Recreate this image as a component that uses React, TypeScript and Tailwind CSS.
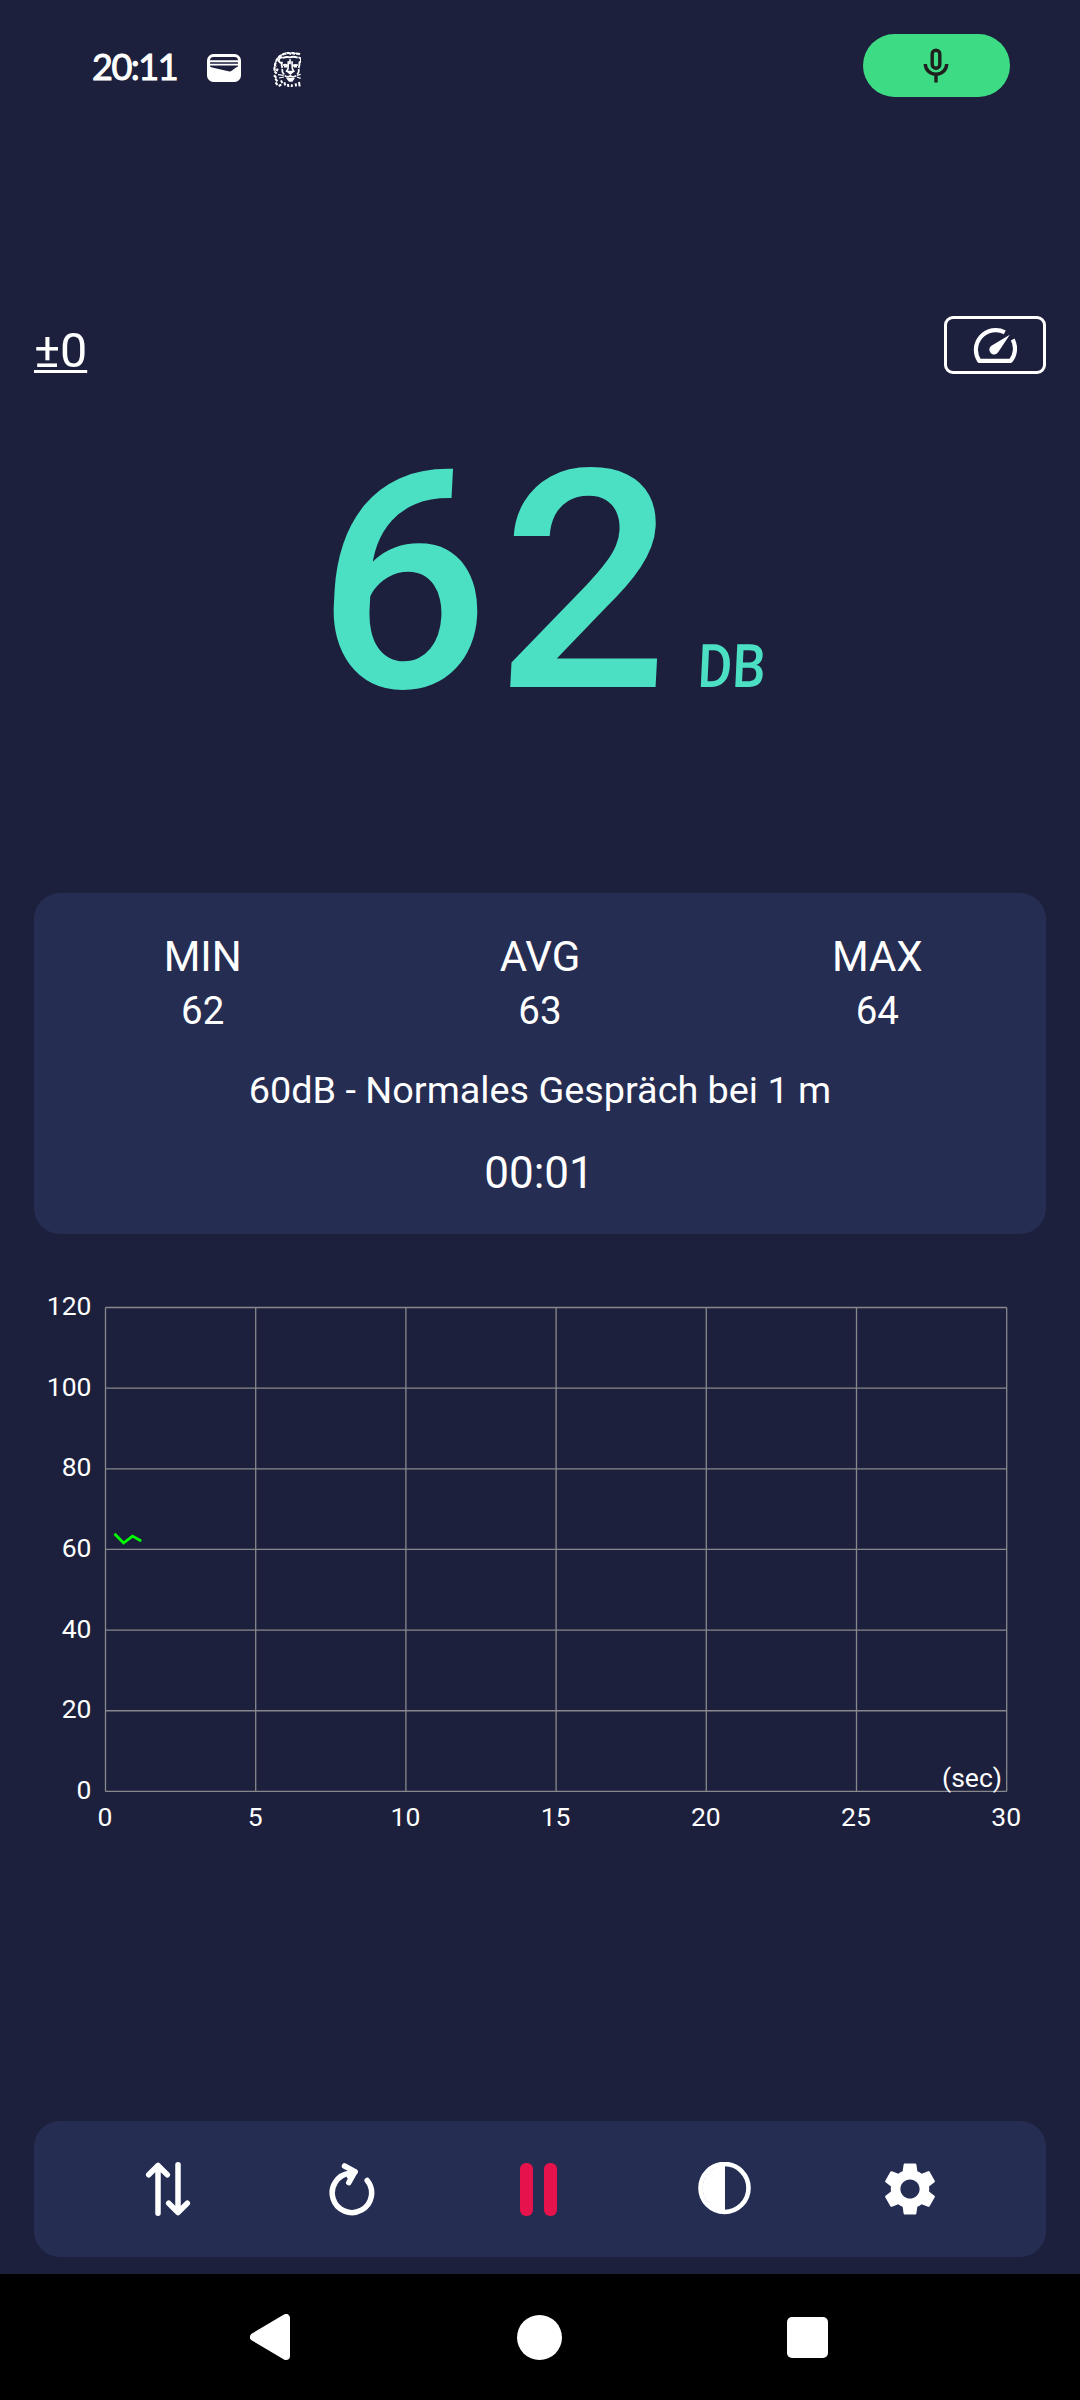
import { MdSettings } from 'react-icons/md';

const stats = [
  { label: 'MIN', value: 62 },
  { label: 'AVG', value: 63 },
  { label: 'MAX', value: 64 },
];

const levels = [120, 100, 80, 60, 40, 20, 0];
const seconds = [0, 5, 10, 15, 20, 25, 30];

// Chart geometry
const LEFT = 105.5;
const TOP = 27.5;
const STEP_X = 150.2;
const STEP_Y = 80.65;

// [seconds, dB]
const samples = [
  [0.3, 63.9],
  [0.6, 61.6],
  [0.9, 63.3],
  [1.19, 62.1],
];

const toX = (sec: number) => LEFT + (sec / 5) * STEP_X;
const toY = (db: number) => TOP + ((120 - db) / 20) * STEP_Y;

function WalletIcon() {
  return (
    <svg className="mt-[5px] ml-[31px]" width="34" height="28" viewBox="0 0 34 28">
      <rect x="1.5" y="1.5" width="31" height="25" rx="5" fill="none" stroke="white" strokeWidth="3" />
      <path d="M3 7.3h28M3 10.6h28" stroke="white" strokeWidth="1.9" />
      <path d="M2 12l3 1.500 17.500 4q1.200.2 2.200-.7L29 13.500l3-1.500v9.500q0 5-5 5H7q-5 0-5-5z" fill="white" />
    </svg>
  );
}

function LionIcon() {
  return (
    <svg className="mt-2 ml-8" width="28" height="36" viewBox="0 0 84 108" fill="none" stroke="white">
      <path d="M81 7q-8-4-14-1-8-5-14-1-9-4-14 0-8-1-12 5-9 1-10 8-8 4-7 12-6 6-3 13-5 6-1 13" strokeWidth="6.500" strokeDasharray="13 1.500" />
      <path d="M5 58l6 7M3 70l7 7M7 80l6 8M8 91l5 8M14 50l-3 7" strokeWidth="6.500" />
      <path d="M29 17q-9-2-11 6t7 10M76 17q6-1 8 5t-6 10" strokeWidth="5.500" />
      <path d="M29 18q11-5 22-2 10-4 23 1M27 29q-3 11 1 19M79 30q2 11-2 18" strokeWidth="5.500" />
      <path d="M30 40q9-5 15 2M59 42q7-6 16-2M33 44h9M63 44h9" strokeWidth="5" />
      <path d="M46 28l-1 22-5 10M57 28l1 22 5 10M51 22v15" strokeWidth="5" />
      <path d="M44 59h16l-8 7zM28 51q-2 11 6 16M77 51q2 11-5 16M52 65v7M35 71q9 7 17 1 8 6 18-1" strokeWidth="5" />
      <path d="M39 78h27l-8 11h-10z" fill="white" stroke="none" />
      <path d="M15 68l17 2M18 78l15-3M72 70l11-3M72 75l11 4" strokeWidth="3.500" />
      <path d="M24 85l4 8M34 91l3 9M45 96l1 9M57 97l-1 8M68 94l1 9M78 90l2 13M25 98l-8 4" strokeWidth="6" />
    </svg>
  );
}

function MicIcon() {
  return (
    <svg className="mr-px" width="26" height="36" viewBox="0 0 26 36" fill="none" stroke="#1f1f1f" strokeWidth="3.400">
      <rect x="9.200" y="2.200" width="7.600" height="18" rx="3.800" />
      <path d="M2.300 16a10.700 10.300 0 0 0 21.400 0M13 26.500v8" />
    </svg>
  );
}

function GaugeIcon() {
  return (
    <svg width="44" height="37" viewBox="0 0 44 37">
      <path
        d="M31.800 5.300A19.800 19.800 0 0 0 6.200 33.800H37.800A19.500 19.500 0 0 0 39.700 12.500"
        fill="none"
        stroke="white"
        strokeWidth="4.200"
        strokeLinejoin="round"
      />
      <path d="M36.800 7.700L25.300 25a4.800 4.800 0 1 1-6.900-6.300z" fill="white" />
    </svg>
  );
}

function SortIcon() {
  return (
    <svg width="54" height="54" viewBox="0 0 54 54" fill="none" stroke="white" strokeWidth="5.500" strokeLinecap="round" strokeLinejoin="round">
      <path d="M17 51.200V3.500M7.700 12.800L17 3.500l9.300 9.300M37 2.800v47.700M27.700 41.200l9.300 9.300 9.300-9.300" />
    </svg>
  );
}

function ReloadIcon() {
  return (
    <svg className="mr-[2px]" width="54" height="54" viewBox="0 0 54 54" fill="none" stroke="white" strokeWidth="5.500" strokeLinecap="round" strokeLinejoin="round">
      <path d="M42.200 18.400A19.700 19.700 0 1 1 24.500 11.300L30 10" />
      <path d="M19.500 4L30 9.700 23.800 20.700" />
      <path d="M23.500 14.500L28.500 11" strokeWidth="4" />
    </svg>
  );
}

function ContrastIcon() {
  return (
    <svg width="54" height="54" viewBox="0 0 54 54">
      <circle cx="26.500" cy="26" r="24" fill="none" stroke="white" strokeWidth="4.600" />
      <path d="M27 3.500V48.500A22.500 22.500 0 0 1 27 3.500z" fill="white" />
    </svg>
  );
}

function Chart() {
  return (
    <svg width="1080" height="570" viewBox="0 0 1080 570" fontSize="26.500" fill="white">
      <g stroke="#88888c" strokeWidth="1.300">
        {levels.map((db) => (
          <line key={db} x1={LEFT} x2={toX(30)} y1={toY(db)} y2={toY(db)} />
        ))}
        {seconds.map((sec) => (
          <line key={sec} x1={toX(sec)} x2={toX(sec)} y1={toY(120)} y2={toY(0)} />
        ))}
      </g>
      {levels.map((db) => (
        <text key={db} x="91.500" y={toY(db) + 7.500} textAnchor="end">
          {db}
        </text>
      ))}
      {seconds.map((sec) => (
        <text key={sec} x={toX(sec) - 0.5} y="546" textAnchor="middle">
          {sec}
        </text>
      ))}
      <text x="1002" y="507" textAnchor="end">
        (sec)
      </text>
      <polyline
        points={samples.map(([sec, db]) => `${toX(sec)},${toY(db)}`).join(' ')}
        fill="none"
        stroke="#00ff00"
        strokeWidth="2.800"
      />
    </svg>
  );
}

export default function App() {
  return (
    <div className="flex h-[2400px] w-[1080px] flex-col overflow-hidden bg-[#1d203c] font-['Roboto',sans-serif] text-white">
      {/* Status bar */}
      <header className="flex h-[131px] items-center pr-[70px] pl-[92px]">
        <span className="w-[84px] font-['Lato',sans-serif] text-[36px] leading-none tracking-[-1.5px] whitespace-nowrap [-webkit-text-stroke:1px_white]">
          20:11
        </span>
        <WalletIcon />
        <LionIcon />
        <div className="ml-auto flex h-[63px] w-[147px] items-center justify-center rounded-full bg-[#3ddc84]">
          <MicIcon />
        </div>
      </header>

      <div className="mt-[185px] flex h-[58px] items-start justify-between px-[34px]">
        <button className="mt-[5px] text-[48.5px] leading-[60px] underline decoration-[3px] underline-offset-[3px]">±0</button>
        <button className="flex h-[58px] w-[102px] items-center justify-center rounded-[9px] border-3 border-white">
          <GaugeIcon />
        </button>
      </div>

      {/* Current level */}
      <div className="mt-[59px] flex h-[460px] items-baseline pl-[310px] text-[#4bdfc3]">
        <span className="origin-bottom -skew-x-3 text-[305px] leading-[300px] font-medium tracking-[8px]">62</span>
        <span className="ml-[25px] origin-left -skew-x-3 scale-x-88 text-[60px] leading-none font-medium">DB</span>
      </div>

      <section className="mx-[34px] h-[341px] rounded-[26px] bg-[#252d53] pt-[39px] text-center">
        <div className="grid grid-cols-3">
          {stats.map((stat) => (
            <div key={stat.label}>
              <div className="text-[42px] leading-[50px]">{stat.label}</div>
              <div className="mt-1 text-[38.5px] leading-[50px]">{stat.value}</div>
            </div>
          ))}
        </div>
        <p className="mt-[29px] text-[37.8px] leading-[50px]">60dB - Normales Gespräch bei 1 m</p>
        <p className="mt-[33px] mr-[2px] text-[44px] leading-[50px]">00:01</p>
      </section>

      <div className="mt-[46px]">
        <Chart />
      </div>

      {/* Toolbar */}
      <nav className="mx-[34px] mt-[271px] flex h-[136px] shrink-0 items-center rounded-[26px] bg-[#252d53] pr-[43px] pl-[41px]">
        <button className="flex flex-1 justify-center">
          <SortIcon />
        </button>
        <button className="flex flex-1 justify-center">
          <ReloadIcon />
        </button>
        <button className="flex flex-1 justify-center gap-[11px]">
          <span className="h-[53px] w-[13px] rounded-[6px] bg-[#e6124b]" />
          <span className="h-[53px] w-[13px] rounded-[6px] bg-[#e6124b]" />
        </button>
        <button className="flex flex-1 justify-center">
          <ContrastIcon />
        </button>
        <button className="flex flex-1 justify-center">
          <MdSettings size={64} />
        </button>
      </nav>

      {/* Android navigation */}
      <footer className="mt-[17px] flex h-[126px] shrink-0 items-center justify-between bg-black pr-[252px] pl-[250px]">
        <svg width="42" height="46" viewBox="0 0 42 46">
          <path d="M4 23L36 4v38z" fill="white" stroke="white" strokeWidth="8" strokeLinejoin="round" />
        </svg>
        <span className="size-[45px] rounded-full bg-white" />
        <span className="size-[41px] rounded-[5px] bg-white" />
      </footer>
    </div>
  );
}
